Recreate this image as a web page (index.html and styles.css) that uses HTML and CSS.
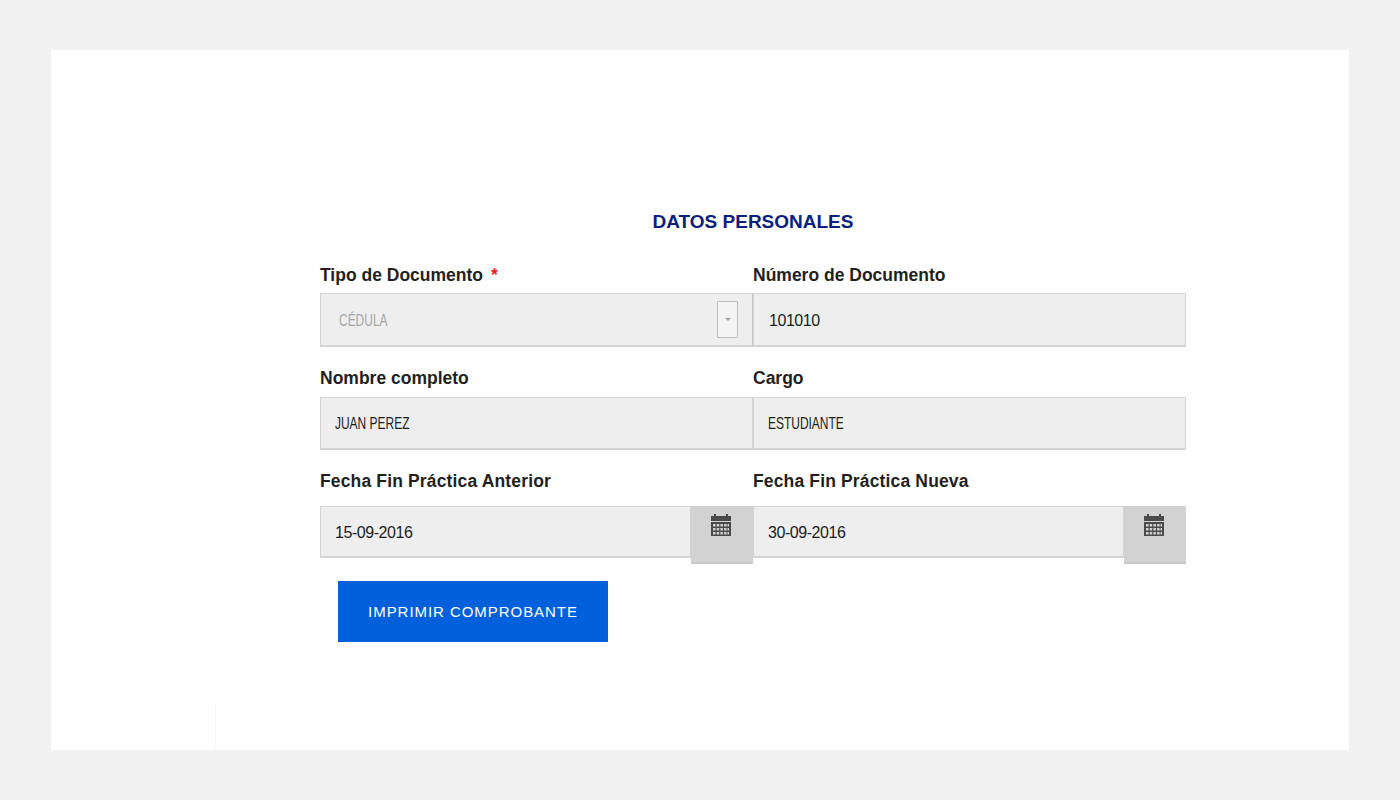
FILE: index.html
```html
<!DOCTYPE html>
<html lang="es">
<head>
<meta charset="utf-8">
<title>Datos personales</title>
<link rel="stylesheet" href="styles.css">
</head>
<body>
<svg class="defs" aria-hidden="true">
  <symbol id="cal" viewBox="0 0 20 22">
    <path d="M3 0h2v2h10V0h2v2h3v5H0V2h3z"/>
    <path fill-rule="evenodd" d="M0 8h20v14H0zM2 10v2.500h2.500V10zM5.700 10v2.500h2.500V10zM9.400 10v2.500h2.500V10zM13.100 10v2.500h2.500V10zM16.500 10v2.500H18V10zM2 14v2.500h2.500V14zM5.700 14v2.500h2.500V14zM9.400 14v2.500h2.500V14zM13.100 14v2.500h2.500V14zM16.500 14v2.500H18V14zM2 18v2.500h2.500V18zM5.700 18v2.500h2.500V18zM9.400 18v2.500h2.500V18zM13.100 18v2.500h2.500V18zM16.500 18v2.500H18V18z"/>
  </symbol>
</svg>
<main class="card">
  <form class="form">
    <h2 class="title">DATOS PERSONALES</h2>
    <div class="row row-first">
      <div class="field">
        <label class="label">Tipo de Documento <span class="req">*</span></label>
        <div class="input input-select">
          <span class="value narrow muted">CÉDULA</span>
          <span class="arrow-box"><span class="caret"></span></span>
        </div>
      </div>
      <div class="field">
        <label class="label">Número de Documento</label>
        <div class="input input-num"><span class="value">101010</span></div>
      </div>
    </div>
    <div class="row row-second">
      <div class="field">
        <label class="label">Nombre completo</label>
        <div class="input input-text"><span class="value narrow">JUAN PEREZ</span></div>
      </div>
      <div class="field">
        <label class="label">Cargo</label>
        <div class="input input-text"><span class="value narrow">ESTUDIANTE</span></div>
      </div>
    </div>
    <div class="row row-third">
      <div class="field">
        <label class="label">Fecha Fin Práctica Anterior</label>
        <div class="date">
          <div class="input input-date"><span class="value">15-09-2016</span></div>
          <span class="addon"><svg class="cal" aria-hidden="true"><use href="#cal"/></svg></span>
        </div>
      </div>
      <div class="field">
        <label class="label">Fecha Fin Práctica Nueva</label>
        <div class="date">
          <div class="input input-date"><span class="value">30-09-2016</span></div>
          <span class="addon"><svg class="cal" aria-hidden="true"><use href="#cal"/></svg></span>
        </div>
      </div>
    </div>
    <button type="button" class="btn">IMPRIMIR COMPROBANTE</button>
  </form>
  <span class="hairline"></span>
</main>
</body>
</html>
```
FILE: styles.css
```css
* { box-sizing: border-box; }
html, body { margin: 0; height: 800px; overflow: hidden; }
body {
  background: #f1f1f1;
  padding: 50px 51px;
  font-family: "Liberation Sans", Arial, sans-serif;
  color: #231f20;
}
.defs { display: none; }
.card {
  position: relative;
  height: 700px;
  background: #fff;
  padding: 160px 0 0 269px;
}
.form { width: 866px; }
.title {
  margin: 0;
  height: 25px;
  line-height: 23px;
  text-align: center;
  font-size: 19px;
  font-weight: 700;
  color: #0b2080;
}
.row { display: flex; }
.row-first { margin-top: 29px; }
.field { width: 433px; }
.label {
  display: block;
  font-size: 17.500px;
  font-weight: 700;
  line-height: 20px;
  color: #231f20;
}
.row-first .label { height: 29px; padding-top: 1px; }
.row-second .label { height: 50px; padding-top: 21px; }
.row-third .label { height: 56px; padding-top: 21px; letter-spacing: .15px; }
.req { color: #f01c1c; margin-left: 3px; }
.input {
  display: flex;
  align-items: center;
  background: #eee;
  border: 2px solid #d4d4d4;
  border-width: 1px 1px 2px 1px;
}
.input-select { height: 54px; padding: 2px 14px 0 18px; justify-content: space-between; border-right-color: #c8c8c8; }
.input-select .arrow-box { margin-top: -2px; }
.input-num { height: 54px; padding: 2px 0 0 15px; }
.input-text { height: 53px; padding-left: 14px; }
.input-date { height: 52px; padding: 2px 0 0 14px; flex: 1; }
.value { font-size: 16px; letter-spacing: -.45px; color: #1c1c1c; }
.narrow {
  display: inline-block;
  font-size: 16.500px;
  letter-spacing: 0;
  transform: scaleX(.725);
  transform-origin: left center;
}
.muted { color: #a6a6a6; }
.arrow-box {
  display: flex;
  align-items: center;
  justify-content: center;
  width: 21px;
  height: 37px;
  background: #f4f4f4;
  border: 1px solid #bdbdbd;
  border-radius: 1px;
}
.caret {
  width: 0;
  height: 0;
  border: 3px solid transparent;
  border-top: 3px solid #a0a0a0;
  border-bottom: 0;
}
.date { display: flex; align-items: flex-start; }
.addon {
  display: flex;
  justify-content: center;
  width: 62px;
  height: 58px;
  padding: 8px 3px 0 0;
  background: #d2d2d2;
  border-bottom: 2px solid #c8c8c8;
}
.cal { width: 20px; height: 22px; fill: #4a4a4a; }
.btn {
  display: block;
  width: 270px;
  height: 61px;
  margin: 17px 0 0 18px;
  padding: 0;
  background: #0060dc;
  border: 0;
  color: #fff;
  font-family: "Liberation Sans", Arial, sans-serif;
  font-size: 15px;
  letter-spacing: .95px;
}
.hairline {
  position: absolute;
  left: 164px;
  top: 653px;
  width: 1px;
  height: 47px;
  background: #f8f8f8;
}
```
